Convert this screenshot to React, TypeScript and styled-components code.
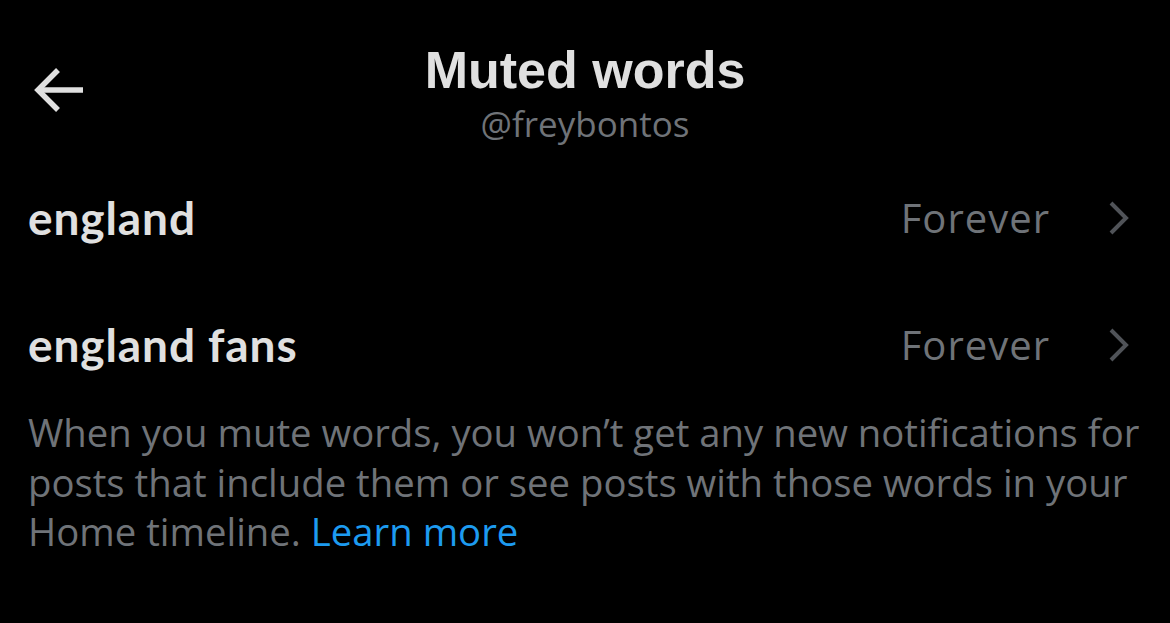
import React from "react";
import styled, { createGlobalStyle } from "styled-components";

const Global = createGlobalStyle`
  html, body { margin: 0; padding: 0; background: #000; }
  body { width: 1170px; height: 623px; overflow: hidden; }
`;

const Page = styled.div`
  width: 1170px;
  height: 623px;
  background: #000;
  display: flex;
  flex-direction: column;
  font-family: "Open Sans", "Liberation Sans", sans-serif;
`;

const Header = styled.header`
  display: grid;
  grid-template-columns: 120px 1fr 120px;
  align-items: start;
  padding-top: 42px;
  height: 112px;
  box-sizing: content-box;
`;

const BackButton = styled.button`
  background: none;
  border: 0;
  padding: 0 0 0 33px;
  display: flex;
  align-items: center;
  color: #e0e0e0;
  margin-top: 25px;
`;

const TitleBlock = styled.div`
  display: flex;
  flex-direction: column;
  align-items: center;
`;

const Title = styled.h1`
  margin: 0;
  font-family: "Liberation Sans", Arial, sans-serif;
  font-weight: 700;
  font-size: 52px;
  line-height: 56px;
  color: #e0e0e0;
`;

const Handle = styled.div`
  font-family: "Open Sans", sans-serif;
  font-size: 35px;
  line-height: 52px;
  color: #6f7378;
`;

const Row = styled.div`
  display: flex;
  align-items: center;
  justify-content: space-between;
  height: 127px;
  padding: 0 40px 0 28px;
`;

const Word = styled.span`
  font-family: Lato, sans-serif;
  font-weight: 700;
  font-size: 46px;
  letter-spacing: 0.9px;
  color: #e0e0e0;
`;

const Meta = styled.span`
  display: flex;
  align-items: center;
  gap: 58px;
  font-family: "Open Sans", sans-serif;
  font-size: 40px;
  letter-spacing: 1px;
  color: #6f7378;
`;

const Description = styled.p`
  margin: 0;
  padding: 0 24px 0 28px;
  font-family: "Open Sans", sans-serif;
  font-size: 38.3px;
  line-height: 49.5px;
  color: #6f7378;
`;

const Link = styled.a`
  color: #1d9bf0;
  text-decoration: none;
`;

const Chevron = () => (
  <svg width="22" height="36" viewBox="0 0 22 36" fill="none" stroke="#505358" strokeWidth="4">
    <path d="M3 3 L18 18 L3 33" />
  </svg>
);

const ArrowLeft = () => (
  <svg width="52" height="46" viewBox="0 0 52 46" fill="none" stroke="#e0e0e0" strokeWidth="5.5">
    <path d="M50 23 H5" />
    <path d="M25 3 L5 23 L25 43" />
  </svg>
);

const words = ["england", "england fans"];

export default function App() {
  return (
    <Page>
      <Global />
      <Header>
        <BackButton aria-label="Back">
          <ArrowLeft />
        </BackButton>
        <TitleBlock>
          <Title>Muted words</Title>
          <Handle>@freybontos</Handle>
        </TitleBlock>
        <div />
      </Header>
      {words.map((w) => (
        <Row key={w}>
          <Word>{w}</Word>
          <Meta>
            Forever
            <Chevron />
          </Meta>
        </Row>
      ))}
      <Description>
        When you mute words, you won’t get any new notifications for posts that include them or see posts with those words in your Home timeline. <Link href="#">Learn more</Link>
      </Description>
    </Page>
  );
}
